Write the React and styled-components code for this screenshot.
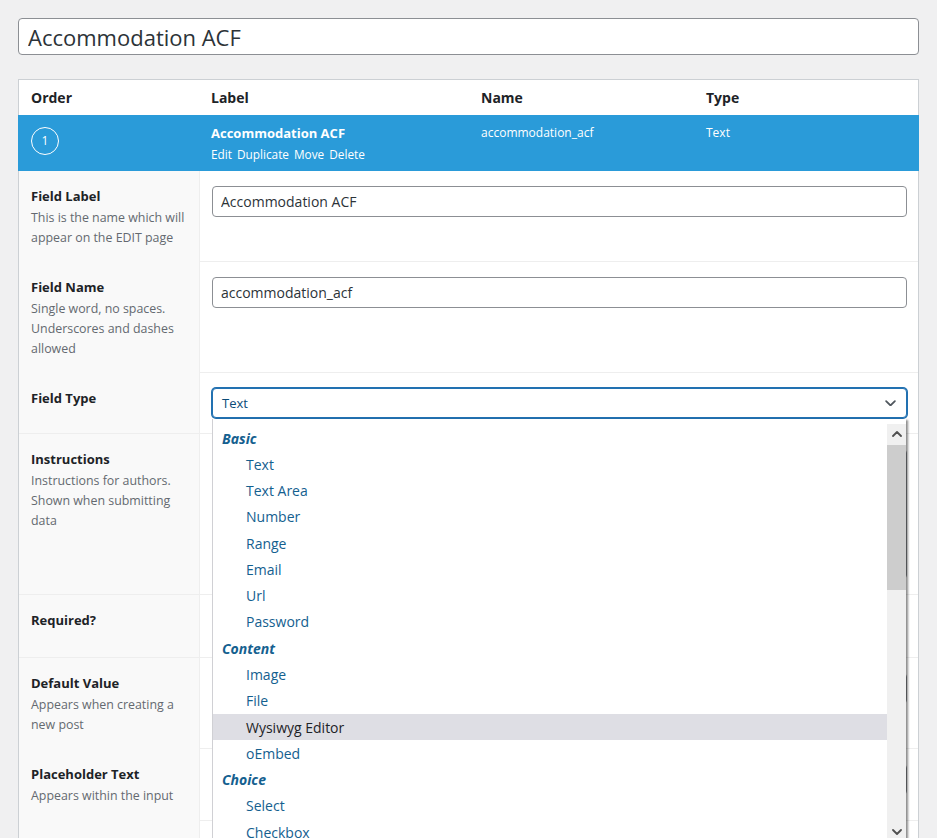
import React from "react";
import styled, { createGlobalStyle } from "styled-components";

const GlobalStyle = createGlobalStyle`
  html, body { margin: 0; padding: 0; overflow: hidden; background: #f0f0f1; }
  body { font-family: "Open Sans", "Noto Sans", sans-serif; color: #1d2327; }
  *, *::before, *::after { box-sizing: border-box; }
`;

const Page = styled.div`
  padding: 18px 18px 0 18px;
  height: 838px;
`;

const TitleInput = styled.input`
  display: block;
  width: 100%;
  height: 37px;
  border: 1px solid #8c8f94;
  border-radius: 4px;
  background: #fff;
  padding: 0 9px;
  font-family: inherit;
  font-size: 22px;
  color: #2c3338;
  outline: none;
`;

const Table = styled.div`
  margin-top: 24px;
  border: 1px solid #ccd0d4;
  background: #fff;
`;

const HeadGrid = styled.div`
  display: grid;
  grid-template-columns: 180px 270px 225px 1fr;
`;

const HeaderRow = styled(HeadGrid)`
  height: 35px;
  align-items: center;
  font-size: 14px;
  font-weight: 700;
  color: #1d2327;
`;

const HeadCell = styled.div`
  padding-left: 12px;
`;

const OpenRow = styled(HeadGrid)`
  height: 56px;
  background: #2a9bd9;
  color: #fff;
  margin: 0 -1px;
  padding: 0 1px;
`;

const OpenCell = styled.div`
  padding: ${(p) => (p.$circle ? "12px 0 0 12px" : "8px 0 0 12px")};
  font-size: 12px;
  line-height: 20px;
`;

const Circle = styled.div`
  width: 28px;
  height: 28px;
  border: 1.5px solid #fff;
  border-radius: 50%;
  display: flex;
  align-items: center;
  justify-content: center;
  font-size: 12px;
  line-height: 1;
`;

const FieldTitle = styled.div`
  font-size: 13px;
  font-weight: 700;
  line-height: 20px;
`;

const Actions = styled.div`
  display: flex;
  gap: 5px;
  margin-top: 1px;
  font-size: 11.8px;
  line-height: 20px;
`;

const Row = styled.div`
  display: grid;
  grid-template-columns: 181px 1fr;
  height: ${(p) => p.$h}px;
  border-top: 1px solid #eee;
  &:first-child { border-top: none; }
`;

const LabelCell = styled.div`
  background: #f9f9f9;
  border-right: 1px solid #eee;
  padding: 15px 12px;
`;

const Label = styled.div`
  font-size: 13px;
  font-weight: 700;
  line-height: 20px;
  color: #1d2327;
`;

const Desc = styled.div`
  margin-top: 2px;
  font-size: 12.4px;
  line-height: 20px;
  color: #646970;
`;

const InputCell = styled.div`
  padding: 15px 11px 15px 12px;
`;

const TextInput = styled.input`
  display: block;
  width: 100%;
  height: 31px;
  border: 1px solid #8c8f94;
  border-radius: 4px;
  background: #fff;
  padding: 0 8px;
  font-family: inherit;
  font-size: 14px;
  color: #2c3338;
  outline: none;
`;

const TextArea = styled.textarea`
  display: block;
  width: 100%;
  height: 130px;
  border: 1px solid #8c8f94;
  border-radius: 4px;
  resize: none;
  font-family: inherit;
`;

const SelectWrap = styled.div`
  position: relative;
`;

const SelectBox = styled.div`
  height: 30px;
  border: 1px solid #2271b1;
  box-shadow: 0 0 0 1px #2271b1;
  border-radius: 4px;
  background: #fff;
  padding: 0 10px 0 9px;
  display: flex;
  align-items: center;
  justify-content: space-between;
  font-size: 13px;
  color: #0a4b78;
`;

const Dropdown = styled.div`
  position: absolute;
  top: calc(100% + 1px);
  left: 0;
  right: 1px;
  height: 422px;
  background: #fff;
  border-left: 1px solid #d0d0d4;
  box-shadow: 2px 1px 2px rgba(0, 0, 0, 0.45);
  display: flex;
  z-index: 5;
`;

const List = styled.div`
  flex: 1;
  padding-top: 6px;
  overflow: hidden;
`;

const Item = styled.div`
  height: 26.27px;
  display: flex;
  align-items: center;
  padding-left: ${(p) => (p.$group ? "9px" : "33px")};
  font-size: 14px;
  font-weight: ${(p) => (p.$group ? 700 : 400)};
  font-style: ${(p) => (p.$group ? "italic" : "normal")};
  color: ${(p) => (p.$active ? "#1d2327" : "#14608f")};
  background: ${(p) => (p.$active ? "#dedee4" : "transparent")};
`;

const Scrollbar = styled.div`
  width: 19px;
  margin-top: 5px;
  background: #f0f0f0;
  display: flex;
  flex-direction: column;
`;

const ScrollBtn = styled.div`
  height: 19px;
  display: flex;
  align-items: center;
  justify-content: center;
`;

const Thumb = styled.div`
  height: 145px;
  margin-top: 2px;
  background: #cdcdcd;
`;

const Spacer = styled.div`
  flex: 1;
`;

const Chevron = ({ up, w = 10, color = "#505050", sw = 1.8 }) => (
  <svg width={w} height={w * 0.6} viewBox="0 0 10 6" fill="none">
    <polyline
      points={up ? "1,5 5,1 9,5" : "1,1 5,5 9,1"}
      stroke={color}
      strokeWidth={sw}
      strokeLinecap="round"
      strokeLinejoin="round"
    />
  </svg>
);

const options = [
  { g: "Basic" },
  { o: "Text" },
  { o: "Text Area" },
  { o: "Number" },
  { o: "Range" },
  { o: "Email" },
  { o: "Url" },
  { o: "Password" },
  { g: "Content" },
  { o: "Image" },
  { o: "File" },
  { o: "Wysiwyg Editor", active: true },
  { o: "oEmbed" },
  { g: "Choice" },
  { o: "Select" },
  { o: "Checkbox" },
];

export default function App() {
  return (
    <>
      <GlobalStyle />
      <Page>
        <TitleInput readOnly value="Accommodation ACF" />
        <Table>
          <HeaderRow>
            <HeadCell>Order</HeadCell>
            <HeadCell>Label</HeadCell>
            <HeadCell>Name</HeadCell>
            <HeadCell>Type</HeadCell>
          </HeaderRow>
          <OpenRow>
            <OpenCell $circle>
              <Circle>1</Circle>
            </OpenCell>
            <OpenCell>
              <FieldTitle>Accommodation ACF</FieldTitle>
              <Actions>
                <span>Edit</span>
                <span>Duplicate</span>
                <span>Move</span>
                <span>Delete</span>
              </Actions>
            </OpenCell>
            <OpenCell>accommodation_acf</OpenCell>
            <OpenCell>Text</OpenCell>
          </OpenRow>
          <div>
            <Row $h={90}>
              <LabelCell>
                <Label>Field Label</Label>
                <Desc>This is the name which will appear on the EDIT page</Desc>
              </LabelCell>
              <InputCell>
                <TextInput readOnly value="Accommodation ACF" />
              </InputCell>
            </Row>
            <Row $h={111}>
              <LabelCell>
                <Label>Field Name</Label>
                <Desc>Single word, no spaces. Underscores and dashes allowed</Desc>
              </LabelCell>
              <InputCell>
                <TextInput readOnly value="accommodation_acf" />
              </InputCell>
            </Row>
            <Row $h={61}>
              <LabelCell>
                <Label>Field Type</Label>
              </LabelCell>
              <InputCell>
                <SelectWrap>
                  <SelectBox>
                    <span>Text</span>
                    <Chevron w={11} color="#50575e" sw={1.6} />
                  </SelectBox>
                  <Dropdown>
                    <List>
                      {options.map((it, i) =>
                        it.g ? (
                          <Item key={i} $group>
                            {it.g}
                          </Item>
                        ) : (
                          <Item key={i} $active={it.active}>
                            {it.o}
                          </Item>
                        )
                      )}
                    </List>
                    <Scrollbar>
                      <ScrollBtn>
                        <Chevron up w={10} />
                      </ScrollBtn>
                      <Thumb />
                      <Spacer />
                      <ScrollBtn>
                        <Chevron w={10} />
                      </ScrollBtn>
                    </Scrollbar>
                  </Dropdown>
                </SelectWrap>
              </InputCell>
            </Row>
            <Row $h={161}>
              <LabelCell>
                <Label>Instructions</Label>
                <Desc>Instructions for authors. Shown when submitting data</Desc>
              </LabelCell>
              <InputCell>
                <TextArea readOnly />
              </InputCell>
            </Row>
            <Row $h={63}>
              <LabelCell>
                <Label>Required?</Label>
              </LabelCell>
              <InputCell />
            </Row>
            <Row $h={91}>
              <LabelCell>
                <Label>Default Value</Label>
                <Desc>Appears when creating a new post</Desc>
              </LabelCell>
              <InputCell>
                <TextInput readOnly value="" />
              </InputCell>
            </Row>
            <Row $h={72}>
              <LabelCell>
                <Label>Placeholder Text</Label>
                <Desc>Appears within the input</Desc>
              </LabelCell>
              <InputCell>
                <TextInput readOnly value="" />
              </InputCell>
            </Row>
            <Row $h={72}>
              <LabelCell />
              <InputCell />
            </Row>
          </div>
        </Table>
      </Page>
    </>
  );
}
